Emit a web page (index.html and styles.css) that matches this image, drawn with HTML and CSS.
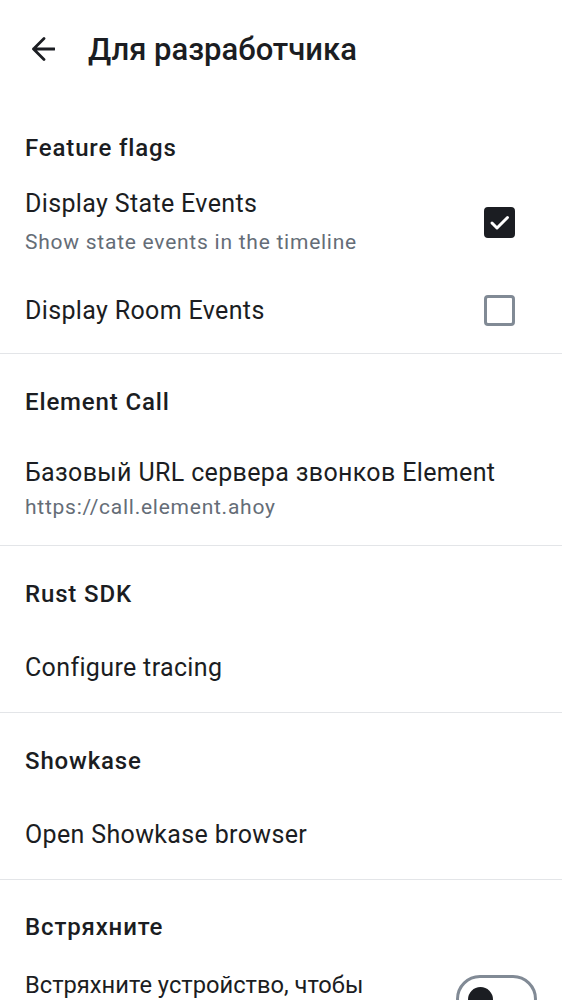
FILE: index.html
```html
<!DOCTYPE html>
<html lang="ru">
<head>
<meta charset="utf-8">
<title>Для разработчика</title>
<link rel="stylesheet" href="styles.css">
</head>
<body>
<div class="screen">
  <header class="topbar">
    <svg class="back" viewBox="0 0 24 26" width="24" height="26" aria-hidden="true">
      <path d="M23.5 13H2.5M13 2.5L2.5 13L13 23.5" fill="none" stroke="#1b1d22" stroke-width="2.8" stroke-linecap="round" stroke-linejoin="round"/>
    </svg>
    <h1 class="title">Для разработчика</h1>
  </header>

  <section class="section section-flags">
    <h2 class="section-header">Feature flags</h2>
    <div class="check-row">
      <div class="row-text">
        <div class="row-title">Display State Events</div>
        <div class="row-sub row-sub-flag">Show state events in the timeline</div>
      </div>
      <span class="checkbox checked">
        <svg viewBox="0 0 31 31" width="31" height="31" aria-hidden="true">
          <path d="M8 16L13 21L23.5 10.5" fill="none" stroke="#ffffff" stroke-width="3" stroke-linecap="round" stroke-linejoin="round"/>
        </svg>
      </span>
    </div>
    <div class="check-row">
      <div class="row-text">
        <div class="row-title">Display Room Events</div>
      </div>
      <span class="checkbox"></span>
    </div>
  </section>

  <section class="section">
    <h2 class="section-header">Element Call</h2>
    <div class="item item-two">
      <div class="row-title">Базовый URL сервера звонков Element</div>
      <div class="row-sub row-sub-url">https://call.element.ahoy</div>
    </div>
  </section>

  <section class="section">
    <h2 class="section-header">Rust SDK</h2>
    <div class="item item-one">
      <div class="row-title">Configure tracing</div>
    </div>
  </section>

  <section class="section">
    <h2 class="section-header">Showkase</h2>
    <div class="item item-one">
      <div class="row-title">Open Showkase browser</div>
    </div>
  </section>

  <section class="section last">
    <h2 class="section-header section-header-last">Встряхните</h2>
    <div class="toggle-row">
      <div class="row-text">
        <div class="row-title">Встряхните устройство, чтобы сообщить об ошибке</div>
      </div>
      <span class="switch"><span class="knob"></span></span>
    </div>
  </section>
</div>
</body>
</html>
```

FILE: styles.css
```css
html, body {
  margin: 0;
  padding: 0;
  background: #ffffff;
}

body {
  font-family: Roboto, "Noto Sans", "DejaVu Sans", sans-serif;
  color: #1b1d22;
  overflow: hidden;
}

.screen {
  width: 562px;
}

.topbar {
  height: 99px;
  display: flex;
  align-items: center;
  padding-left: 31px;
  box-sizing: border-box;
}

.back {
  display: block;
  flex: none;
  margin-top: -1px;
}

.title {
  margin: 0 0 0 33px;
  font-size: 31px;
  font-weight: 500;
  line-height: 36px;
  letter-spacing: 0;
}

.section {
  border-bottom: 1px solid #e3e5e8;
}

.section.last {
  border-bottom: none;
}

.section-flags {
  padding-bottom: 7px;
}

.section-header {
  margin: 0;
  padding: 34px 25px 9px;
  font-size: 24px;
  font-weight: 500;
  line-height: 28px;
  letter-spacing: 0.85px;
}

.section-flags .section-header {
  padding-top: 35px;
  padding-bottom: 8px;
}

.section-header-last {
  padding-top: 33px;
  padding-bottom: 10px;
}

.check-row {
  display: flex;
  align-items: center;
  padding: 20px 47px 20px 25px;
}

.row-text {
  flex: 1;
  min-width: 0;
}

.row-title {
  font-size: 25px;
  line-height: 28px;
  font-weight: 400;
  letter-spacing: 0.35px;
}

.row-sub {
  color: #656d77;
  font-size: 21px;
  line-height: 26px;
  letter-spacing: 0.75px;
}

.row-sub-flag {
  margin-top: 11px;
}

.row-sub-url {
  margin-top: 6px;
  line-height: 28px;
}

.checkbox {
  flex: none;
  width: 31px;
  height: 31px;
  box-sizing: border-box;
  border: 3px solid #818a95;
  border-radius: 4px;
  display: flex;
  align-items: center;
  justify-content: center;
}

.checkbox.checked {
  background: #1b1d22;
  border-color: #1b1d22;
}

.checkbox.checked svg {
  display: block;
  flex: none;
  margin: -3px;
}

.item {
  padding: 0 25px;
}

.item-two {
  padding-top: 34px;
  padding-bottom: 24px;
}

.item-one {
  padding-top: 37px;
  padding-bottom: 30px;
}

.toggle-row {
  display: flex;
  align-items: center;
  gap: 24px;
  padding: 20px 25px 20px 25px;
}

.toggle-row .row-title {
  font-size: 23.7px;
  letter-spacing: 0;
}

.switch {
  flex: none;
  width: 81px;
  height: 48px;
  box-sizing: border-box;
  border: 3px solid #818a95;
  border-radius: 24px;
  display: flex;
  align-items: center;
  padding-left: 9px;
}

.knob {
  width: 25px;
  height: 25px;
  border-radius: 50%;
  background: #1b1d22;
}
```
